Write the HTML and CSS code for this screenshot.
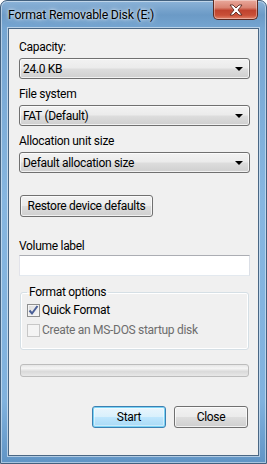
FILE: index.html
```html
<!DOCTYPE html>
<html>
<head>
<meta charset="utf-8">
<link rel="stylesheet" href="styles.css">
</head>
<body>
<div class="window">
  <div class="titlebar">
    <span class="title">Format Removable Disk (E:)</span>
    <div class="close-btn">
      <svg width="16" height="12" viewBox="0 0 16 12"><path d="M2 1 L5 1 L8 4 L11 1 L14 1 L10 6 L14 11 L11 11 L8 8 L5 11 L2 11 L6 6 Z" fill="#fff" stroke="#5a2a22" stroke-width="0.9" stroke-linejoin="round"/></svg>
    </div>
  </div>
  <div class="client">
    <div class="label">Capacity:</div>
    <div class="combo"><span>24.0 KB</span><i class="arrow"></i></div>
    <div class="label gap">File system</div>
    <div class="combo"><span>FAT (Default)</span><i class="arrow"></i></div>
    <div class="label gap">Allocation unit size</div>
    <div class="combo"><span>Default allocation size</span><i class="arrow"></i></div>
    <div class="button restore">Restore device defaults</div>
    <div class="label vol">Volume label</div>
    <div class="textbox"></div>
    <fieldset class="group">
      <legend>Format options</legend>
      <div class="check-row">
        <span class="checkbox checked">
          <svg width="11" height="11" viewBox="0 0 11 11"><path d="M1.5 5.5 L4 8.5 L9.5 1" fill="none" stroke="#4a5f97" stroke-width="2"/></svg>
        </span>
        <span>Quick Format</span>
      </div>
      <div class="check-row disabled">
        <span class="checkbox"></span>
        <span>Create an MS-DOS startup disk</span>
      </div>
    </fieldset>
    <div class="progress"></div>
    <div class="actions">
      <div class="button default">Start</div>
      <div class="button">Close</div>
    </div>
  </div>
</div>
</body>
</html>
```
FILE: styles.css
```css
html, body {
  margin: 0;
  padding: 0;
  background: #ffffff;
}
body {
  width: 267px;
  height: 464px;
  font-family: "Roboto", "Noto Sans", sans-serif;
  font-size: 12px;
  letter-spacing: -0.3px;
  color: #000;
}
.window {
  box-sizing: border-box;
  width: 267px;
  height: 464px;
  border: 1px solid #42607e;
  border-radius: 7px 7px 0 0;
  background: linear-gradient(180deg, #8cb3d8 0px, #6b9ac6 14px, #76a6d2 28px, #86b6e0 200px, #80b2de 400px, #5f93c4 464px);
  display: flex;
  flex-direction: column;
  box-shadow: inset 0 0 0 1px rgba(255,255,255,0.45);
}
.titlebar {
  height: 27px;
  display: flex;
  justify-content: space-between;
  align-items: flex-start;
  padding: 0 8px 0 7px;
}
.title {
  margin-top: 6px;
  line-height: 16px;
  font-size: 12.3px;
  letter-spacing: -0.2px;
  text-shadow: 0 0 6px rgba(255,255,255,0.9), 0 0 3px rgba(255,255,255,0.9);
}
.close-btn {
  box-sizing: border-box;
  width: 45px;
  height: 20px;
  margin-top: -1px;
  border: 1px solid #5b2a22;
  border-top: none;
  border-radius: 0 0 5px 5px;
  background: linear-gradient(180deg, #e9a99c 0%, #d98372 40%, #c0432e 55%, #c94f37 80%, #e2846b 100%);
  box-shadow: inset 0 0 0 1px rgba(255,255,255,0.35);
  display: flex;
  align-items: center;
  justify-content: center;
}
.client {
  flex: 1;
  margin: 0 7px 7px 7px;
  border: 1px solid #4a6784;
  background: #f0f0f0;
  padding: 11px 9px 0 10px;
  display: flex;
  flex-direction: column;
  box-shadow: 0 0 0 1px rgba(255,255,255,0.5);
}
.label {
  line-height: 15px;
  height: 15px;
}
.label.gap {
  margin-top: 8px;
}
.combo {
  box-sizing: border-box;
  margin-top: 3px;
  height: 21px;
  width: 231px;
  border: 1px solid #707070;
  border-radius: 3px;
  background: linear-gradient(180deg, #f2f2f2 0%, #ebebeb 48%, #dddddd 52%, #cfcfcf 100%);
  box-shadow: inset 0 0 0 1px rgba(255,255,255,0.7);
  display: flex;
  align-items: center;
  justify-content: space-between;
  padding: 0 6px 0 3px;
}
.arrow {
  width: 0;
  height: 0;
  border-left: 4px solid transparent;
  border-right: 4px solid transparent;
  border-top: 4px solid #000;
  margin-top: 1px;
}
.button {
  box-sizing: border-box;
  height: 22px;
  border: 1px solid #707070;
  border-radius: 3px;
  background: linear-gradient(180deg, #f2f2f2 0%, #ebebeb 48%, #dddddd 52%, #cfcfcf 100%);
  box-shadow: inset 0 0 0 1px rgba(255,255,255,0.7);
  display: flex;
  align-items: center;
  justify-content: center;
}
.restore {
  width: 133px;
  margin-top: 22px;
  margin-left: 1px;
}
.label.vol {
  margin-top: 22px;
}
.textbox {
  box-sizing: border-box;
  margin-top: 1px;
  height: 21px;
  width: 231px;
  background: #fff;
  border: 1px solid #abadb3;
  border-color: #abadb3 #dbdfe6 #e3e9ef #e2e3ea;
}
.group {
  margin: 9px 0 0 1px;
  width: 229px;
  box-sizing: border-box;
  height: 65px;
  border: 1px solid #d5dfe5;
  border-radius: 3px;
  padding: 2px 0 0 6px;
  box-shadow: inset 0 0 0 1px #fff;
}
.group legend {
  padding: 0 2px;
  margin-left: 0;
  line-height: 15px;
}
.check-row {
  display: flex;
  align-items: center;
  height: 16px;
  gap: 2px;
}
.check-row + .check-row {
  margin-top: 4px;
}
.checkbox {
  box-sizing: border-box;
  width: 13px;
  height: 13px;
  border: 1px solid #8e8f8f;
  background: linear-gradient(135deg, #dcdcdc, #f8f8f8);
  box-shadow: inset 0 0 0 1px #f4f4f4;
  display: flex;
  align-items: center;
  justify-content: center;
}
.disabled {
  color: #6d6d6d;
}
.disabled .checkbox {
  border-color: #c7c7c7;
  background: #f4f4f4;
}
.progress {
  box-sizing: border-box;
  margin: 14px 0 0 1px;
  width: 229px;
  height: 13px;
  border: 1px solid #bcbcbc;
  border-radius: 3px;
  background: linear-gradient(180deg, #e6e6e6 0%, #f5f5f5 30%, #dadada 60%, #e8e8e8 100%);
}
.actions {
  margin-top: 29px;
  display: flex;
  justify-content: flex-end;
  gap: 8px;
  padding-right: 1px;
}
.actions .button {
  width: 74px;
}
.button.default {
  border-color: #3c7fb1;
  background: linear-gradient(180deg, #eaf6fd 0%, #d9f0fc 48%, #bee6fd 52%, #a7d9f5 100%);
  box-shadow: inset 0 0 0 1px #7ad3f5, inset 0 0 0 2px rgba(255,255,255,0.4);
}
```
